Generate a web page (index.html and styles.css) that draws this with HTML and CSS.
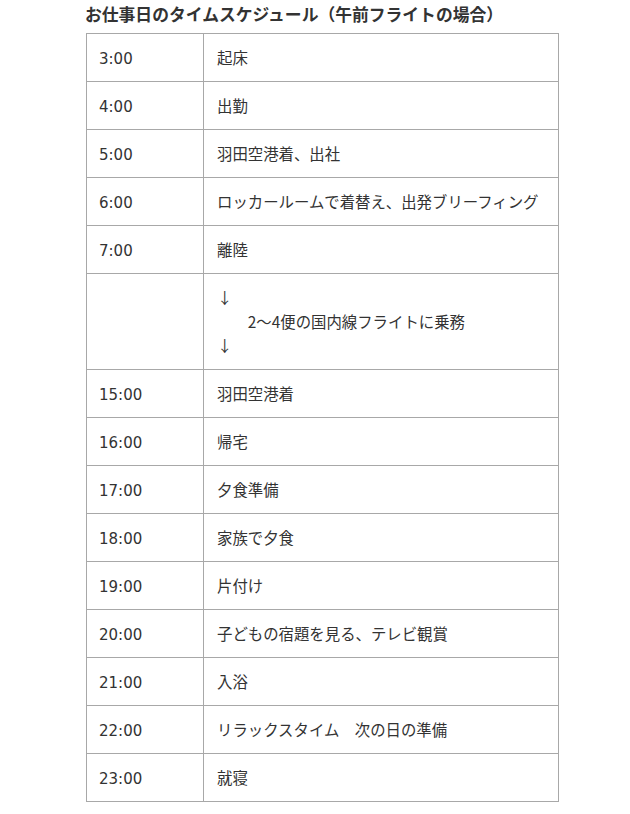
FILE: index.html
```html
<!DOCTYPE html>
<html lang="ja">
<head>
<meta charset="utf-8">
<link rel="stylesheet" href="styles.css">
</head>
<body>
<div class="wrap">
  <h2 class="title">お仕事日のタイムスケジュール（午前フライトの場合）</h2>
  <table class="schedule">
    <tbody>
      <tr><td class="time">3:00</td><td class="desc">起床</td></tr>
      <tr><td class="time">4:00</td><td class="desc">出勤</td></tr>
      <tr><td class="time">5:00</td><td class="desc">羽田空港着、出社</td></tr>
      <tr><td class="time">6:00</td><td class="desc">ロッカールームで着替え、出発ブリーフィング</td></tr>
      <tr><td class="time">7:00</td><td class="desc">離陸</td></tr>
      <tr><td class="time"></td><td class="desc">↓<br>　　2〜4便の国内線フライトに乗務<br>↓</td></tr>
      <tr><td class="time">15:00</td><td class="desc">羽田空港着</td></tr>
      <tr><td class="time">16:00</td><td class="desc">帰宅</td></tr>
      <tr><td class="time">17:00</td><td class="desc">夕食準備</td></tr>
      <tr><td class="time">18:00</td><td class="desc">家族で夕食</td></tr>
      <tr><td class="time">19:00</td><td class="desc">片付け</td></tr>
      <tr><td class="time">20:00</td><td class="desc">子どもの宿題を見る、テレビ観賞</td></tr>
      <tr><td class="time">21:00</td><td class="desc">入浴</td></tr>
      <tr><td class="time">22:00</td><td class="desc">リラックスタイム　次の日の準備</td></tr>
      <tr><td class="time">23:00</td><td class="desc">就寝</td></tr>
    </tbody>
  </table>
</div>
</body>
</html>
```

FILE: styles.css
```css
html, body {
  margin: 0;
  padding: 0;
  background: #ffffff;
}

body {
  font-family: "DejaVu Sans", "Noto Sans CJK JP", sans-serif;
  color: #333333;
}

.wrap {
  width: 473px;
  margin-left: 86px;
}

.title {
  margin: 0 0 5px -1px;
  font-size: 16.8px;
  line-height: 28px;
  font-weight: bold;
  color: #333333;
  font-family: "Noto Sans CJK JP", sans-serif;
  white-space: nowrap;
}

.schedule {
  width: 473px;
  border-collapse: collapse;
  table-layout: fixed;
  font-size: 15px;
}

.schedule td {
  border: 1px solid #a8a8a8;
  padding: 11px 12px 12px 12px;
  line-height: 24px;
  vertical-align: middle;
  text-align: left;
}

.schedule .time {
  width: 117px;
  box-sizing: border-box;
  padding-top: 13px;
  padding-bottom: 10px;
}

.schedule .desc {
  padding-left: 13px;
  font-family: "Noto Sans CJK JP", sans-serif;
  font-size: 15.4px;
  white-space: nowrap;
}
```
